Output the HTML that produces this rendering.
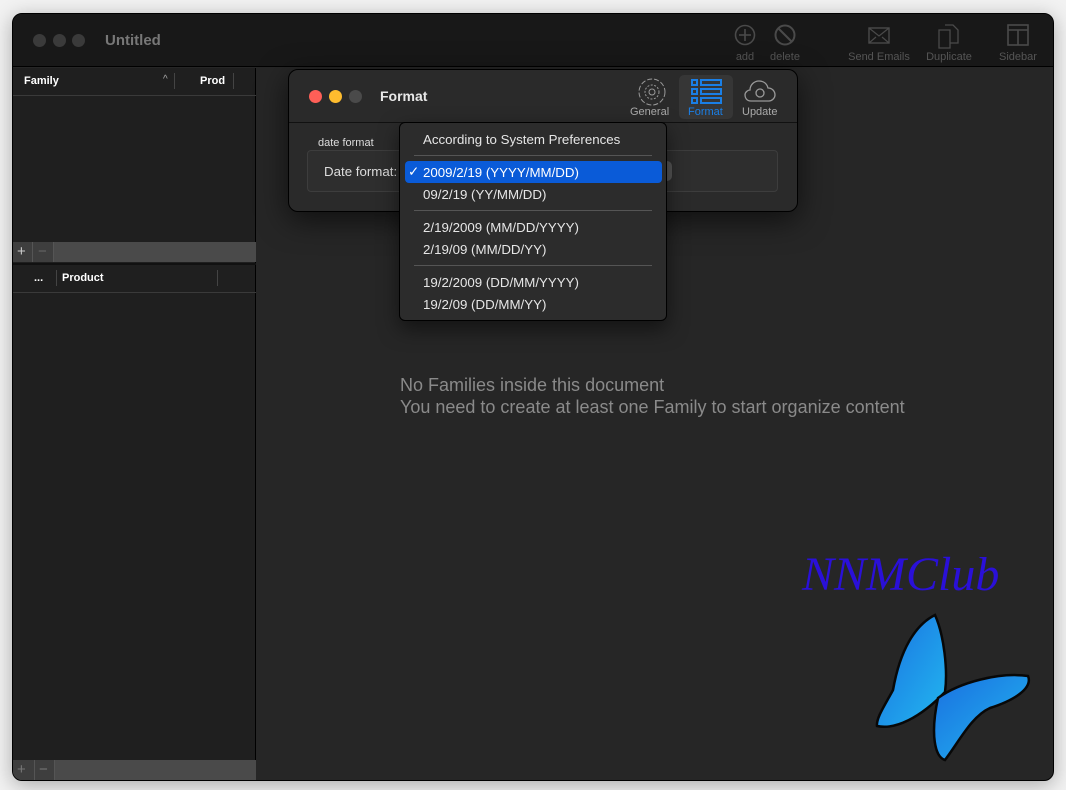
<!DOCTYPE html>
<html><head><style>
*{margin:0;padding:0;box-sizing:border-box}
body{width:1066px;height:790px;background:#f2f2f2;font-family:"Liberation Sans",sans-serif;position:relative;overflow:hidden}
.abs{position:absolute}
.win{left:12px;top:13px;width:1042px;height:768px;background:#262626;border-radius:10px;border:1px solid #000;overflow:hidden;box-shadow:0 4px 20px rgba(0,0,0,.3)}
.tb{left:0;top:0;width:1042px;height:53px;background:#181818;border-bottom:1px solid #000}
.dot{width:13px;height:13px;border-radius:50%}
.tt{font-size:15px;color:#777;font-weight:bold}
.tl{font-size:11px;color:#555;text-align:center}
.side{left:0;top:54px;width:243px;height:714px;background:#1f1f1f;border-right:1px solid #000}
.hdr{font-size:11px;font-weight:bold;color:#fff}
.bar{background:#4a4a4a;height:20px}
.dlg{left:288px;top:69px;width:510px;height:143px;background:#2a2a2a;border:1px solid #000;border-radius:10px;box-shadow:0 8px 30px rgba(0,0,0,.6)}
.menu{left:399px;top:122px;width:268px;height:199px;background:#2c2c2c;border:1px solid #000;border-radius:6px;box-shadow:0 8px 20px rgba(0,0,0,.5);font-size:13.3px;color:#e6e6e6}
.mi{position:absolute;left:23px}
.sep{position:absolute;left:14px;width:238px;height:1px;background:#555}
</style></head><body>
<div class="abs win">
 <div class="abs tb">
  <div class="abs dot" style="left:20px;top:20px;background:#3a3a3a"></div>
  <div class="abs dot" style="left:40px;top:20px;background:#3a3a3a"></div>
  <div class="abs dot" style="left:59px;top:20px;background:#3a3a3a"></div>
  <div class="abs tt" style="left:92px;top:18px">Untitled</div>
  <svg class="abs" style="left:721px;top:10px" width="22" height="22"><circle cx="11" cy="11" r="9.5" fill="none" stroke="#4a4a4a" stroke-width="1.6"/><path d="M11 5v12M5 11h12" stroke="#4a4a4a" stroke-width="1.6"/></svg>
  <div class="abs tl" style="left:714px;top:37px;width:36px">add</div>
  <svg class="abs" style="left:761px;top:10px" width="22" height="22"><circle cx="11" cy="11" r="9.5" fill="none" stroke="#4a4a4a" stroke-width="2"/><path d="M4.5 4.5l13 13" stroke="#4a4a4a" stroke-width="2"/></svg>
  <div class="abs tl" style="left:752px;top:37px;width:40px">delete</div>
  <svg class="abs" style="left:855px;top:13px" width="22" height="17"><rect x="1" y="1" width="20" height="15" fill="none" stroke="#4a4a4a" stroke-width="1.4"/><path d="M1 1l10 8 10-8M1 16l7-6M21 16l-7-6" fill="none" stroke="#4a4a4a" stroke-width="1.2"/></svg>
  <div class="abs tl" style="left:830px;top:37px;width:72px">Send Emails</div>
  <svg class="abs" style="left:925px;top:10px" width="22" height="25"><path d="M1 6h11v18H1zM7 1h8l5 5v13h-8" fill="none" stroke="#4a4a4a" stroke-width="1.3"/></svg>
  <div class="abs tl" style="left:905px;top:37px;width:62px">Duplicate</div>
  <svg class="abs" style="left:994px;top:10px" width="22" height="22"><rect x="1" y="1" width="20" height="20" fill="none" stroke="#4a4a4a" stroke-width="1.6"/><path d="M1 6h20M11 6v15" stroke="#4a4a4a" stroke-width="1.6"/></svg>
  <div class="abs tl" style="left:980px;top:37px;width:50px">Sidebar</div>
 </div>
 <div class="abs side">
  <div class="abs hdr" style="left:11px;top:7px">Family</div>
  <div class="abs" style="left:150px;top:6px;color:#aaa;font-size:10px">^</div>
  <div class="abs" style="left:161px;top:5px;width:1px;height:16px;background:#444"></div>
  <div class="abs hdr" style="left:187px;top:7px">Prod</div>
  <div class="abs" style="left:220px;top:5px;width:1px;height:16px;background:#444"></div>
  <div class="abs" style="left:0;top:27px;width:243px;height:1px;background:#3a3a3a"></div>
  <div class="abs bar" style="left:0;top:174px;width:243px"></div>
  <div class="abs" style="left:0;top:174px;width:40px;height:20px;background:#3e3e3e"></div>
  <div class="abs" style="left:4px;top:175px;color:#ccc;font-size:15px">+</div>
  <div class="abs" style="left:19px;top:174px;width:1px;height:20px;background:#555"></div>
  <div class="abs" style="left:25px;top:175px;color:#666;font-size:15px">−</div>
  <div class="abs" style="left:40px;top:174px;width:1px;height:20px;background:#555"></div>
  <div class="abs" style="left:0;top:195px;width:243px;height:2px;background:#111"></div>
  <div class="abs hdr" style="left:21px;top:204px">...</div>
  <div class="abs" style="left:43px;top:202px;width:1px;height:16px;background:#444"></div>
  <div class="abs hdr" style="left:49px;top:204px">Product</div>
  <div class="abs" style="left:204px;top:202px;width:1px;height:16px;background:#444"></div>
  <div class="abs" style="left:0;top:224px;width:243px;height:1px;background:#3a3a3a"></div>
  <div class="abs bar" style="left:0;top:692px;width:243px"></div>
  <div class="abs" style="left:0;top:692px;width:41px;height:20px;background:#3e3e3e"></div>
  <div class="abs" style="left:4px;top:693px;color:#777;font-size:15px">+</div>
  <div class="abs" style="left:21px;top:692px;width:1px;height:20px;background:#555"></div>
  <div class="abs" style="left:26px;top:693px;color:#777;font-size:15px">−</div>
  <div class="abs" style="left:41px;top:692px;width:1px;height:20px;background:#555"></div>
 </div>
 <div class="abs" style="left:387px;top:360px;font-size:18px;color:#8a8a8a;line-height:22px;white-space:nowrap">No Families inside this document<br>You need to create at least one Family to start organize content</div>
 <div class="abs" style="left:789px;top:533px;font-family:'Liberation Serif',serif;font-style:italic;font-size:48px;color:#2a10d8">NNMClub</div>
</div>
<svg class="abs" style="left:0;top:0" width="1066" height="790">
 <defs><linearGradient id="g" x1="0" y1="0" x2="1" y2="1"><stop offset="0" stop-color="#1a6fe0"/><stop offset="1" stop-color="#22b8f0"/></linearGradient></defs>
 <path d="M935 615C915 625 900 650 893 690C885 705 876 718 877 726C895 730 920 718 945 692C948 670 944 635 935 615Z" fill="url(#g)" stroke="#080808" stroke-width="2.5"/>
 <path d="M938 698C960 682 1000 672 1028 676C1033 688 1015 700 990 708C972 716 960 740 945 760C935 757 930 735 938 698Z" fill="url(#g)" stroke="#080808" stroke-width="2.5"/>
</svg>
<div class="abs dlg">
 <div class="abs dot" style="left:20px;top:20px;background:#fe5f57"></div>
 <div class="abs dot" style="left:40px;top:20px;background:#febc2e"></div>
 <div class="abs dot" style="left:60px;top:20px;background:#4a4a4a"></div>
 <div class="abs" style="left:91px;top:18px;font-size:14px;font-weight:bold;color:#e8e8e8">Format</div>
 <svg class="abs" style="left:349px;top:8px" width="28" height="28"><circle cx="14" cy="14" r="13" fill="none" stroke="#999" stroke-dasharray="5 2"/><circle cx="14" cy="14" r="7" fill="none" stroke="#999" stroke-dasharray="2 1.5"/><circle cx="14" cy="14" r="3" fill="none" stroke="#999"/></svg>
 <div class="abs" style="left:341px;top:36px;font-size:11px;color:#aaa">General</div>
 <div class="abs" style="left:390px;top:5px;width:54px;height:44px;background:#363636;border-radius:5px"></div>
 <svg class="abs" style="left:402px;top:9px" width="31" height="25"><g fill="none" stroke="#1a7fe6" stroke-width="2"><rect x="1" y="1" width="5" height="5"/><rect x="1" y="10" width="5" height="5"/><rect x="1" y="19" width="5" height="5"/><rect x="10" y="1" width="20" height="5"/><rect x="10" y="10" width="20" height="5"/><rect x="10" y="19" width="20" height="5"/></g></svg>
 <div class="abs" style="left:399px;top:36px;font-size:11px;color:#1a7fe6">Format</div>
 <svg class="abs" style="left:455px;top:10px" width="32" height="22"><path d="M7 21C2 21 1 17 1 15c0-3 3-5 5-5 0-5 4-9 9-9 5 0 8 3 9 7 4 0 7 3 7 7 0 3-3 6-6 6Z" fill="none" stroke="#999" stroke-width="1.3"/><circle cx="16" cy="13" r="4" fill="none" stroke="#999" stroke-width="1.3"/></svg>
 <div class="abs" style="left:453px;top:36px;font-size:11px;color:#aaa">Update</div>
 <div class="abs" style="left:0;top:52px;width:508px;height:1px;background:#111"></div>
 <div class="abs" style="left:29px;top:67px;font-size:11px;color:#ddd">date format</div>
 <div class="abs" style="left:18px;top:80px;width:471px;height:42px;border:1px solid #3d3d3d;border-radius:4px;background:#2e2e2e"></div>
 <div class="abs" style="left:35px;top:94px;font-size:13.3px;color:#ddd">Date format:</div>
 <div class="abs" style="left:370px;top:91px;width:13px;height:20px;border-radius:0 5px 5px 0;background:#555"></div>
</div>
<div class="abs menu">
 <div class="mi" style="top:9px">According to System Preferences</div>
 <div class="sep" style="top:32px"></div>
 <div class="abs" style="left:5px;top:38px;width:257px;height:22px;background:#0a5bd8;border-radius:4px"></div>
 <div class="abs" style="left:8px;top:41px;color:#fff">✓</div>
 <div class="mi" style="top:42px;color:#fff">2009/2/19 (YYYY/MM/DD)</div>
 <div class="mi" style="top:64px">09/2/19 (YY/MM/DD)</div>
 <div class="sep" style="top:87px"></div>
 <div class="mi" style="top:97px">2/19/2009 (MM/DD/YYYY)</div>
 <div class="mi" style="top:119px">2/19/09 (MM/DD/YY)</div>
 <div class="sep" style="top:142px"></div>
 <div class="mi" style="top:152px">19/2/2009 (DD/MM/YYYY)</div>
 <div class="mi" style="top:174px">19/2/09 (DD/MM/YY)</div>
</div>
</body></html>
